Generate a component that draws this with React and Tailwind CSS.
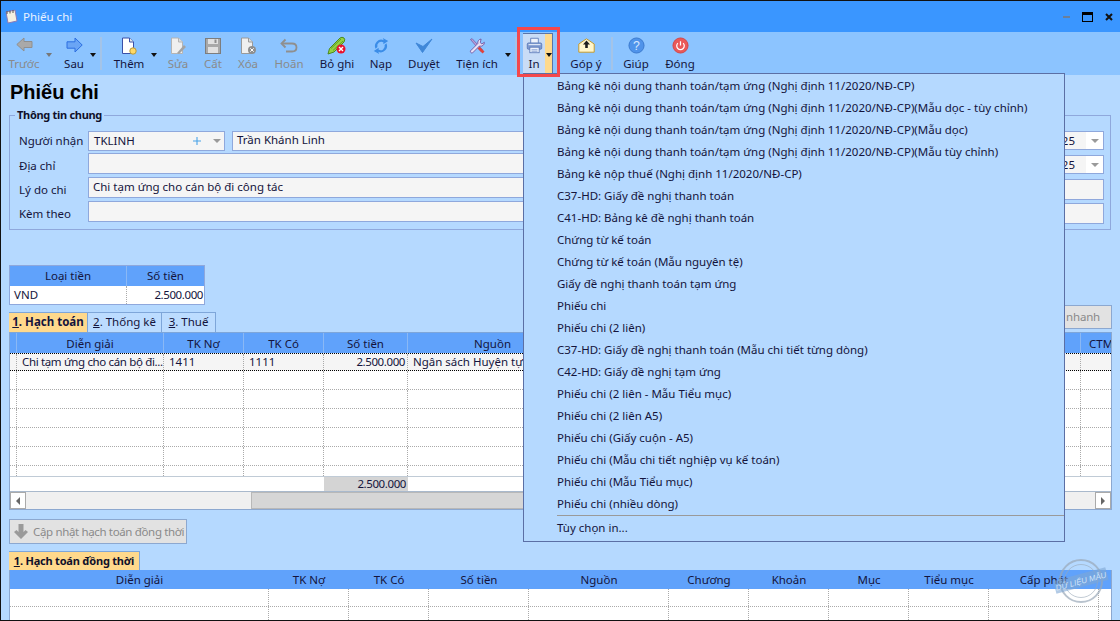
import React from "react";

const F = { fontFamily: '"Noto Sans", sans-serif' };

function ArrowL() {
  return (
    <svg width="17" height="15" viewBox="0 0 17 15" className="mb-[2px]">
      <path d="M0.8 7.5 L8 1 V4.5 H16 V10.5 H8 V14 Z" fill="#a9a9a9" stroke="#8f8f8f" />
    </svg>
  );
}
function ArrowR() {
  return (
    <svg width="17" height="16" viewBox="0 0 17 16" className="mb-[2px]">
      <path d="M16.2 8 L9 1 V4.8 H1 V11.2 H9 V15 Z" fill="#6aa5f5" stroke="#2d6fe0" />
    </svg>
  );
}
function Doc({ stroke = "#3a50a8", fold = "#e8e8e8", fill = "#ffffff", children }) {
  return (
    <svg width="18" height="18" viewBox="0 0 18 18">
      <path d="M2.5 1 H9.5 L13.5 5 V16.5 H2.5 Z" fill={fill} stroke={stroke} />
      <path d="M9.5 1 V5 H13.5" fill={fold} stroke={stroke} />
      {children}
    </svg>
  );
}
const Icons = {
  prev: <ArrowL />,
  next: <ArrowR />,
  add: (
    <Doc>
      <circle cx="13" cy="14" r="3.2" fill="#ffd966" stroke="#b89a3a" />
    </Doc>
  ),
  edit: (
    <Doc stroke="#b4b4b4" fill="#efefef" fold="#dddddd">
      <path d="M8 16 L15 8 L17 10 L10 17 Z" fill="#a3a3a3" />
    </Doc>
  ),
  save: (
    <svg width="16" height="16" viewBox="0 0 16 16">
      <rect x="0.5" y="0.5" width="15" height="15" fill="#a8a8a8" stroke="#7d7d7d" />
      <rect x="3" y="1" width="10" height="5" fill="#e0e0e0" />
      <rect x="3" y="9" width="10" height="6" fill="#e0e0e0" />
      <rect x="9.5" y="1.5" width="2" height="3.5" fill="#8f8f8f" />
    </svg>
  ),
  del: (
    <Doc stroke="#9a9a9a" fill="#efefef" fold="#dddddd">
      <circle cx="13" cy="13" r="4" fill="#8e8e8e" />
      <path d="M11.3 11.3 L14.7 14.7 M14.7 11.3 L11.3 14.7" stroke="#fff" />
    </Doc>
  ),
  undo: (
    <svg width="18" height="16" viewBox="0 0 18 16">
      <path d="M5.5 1.5 L1.5 5.5 L5.5 9.5" fill="none" stroke="#8f8f8f" strokeWidth="1.8" />
      <path d="M2 5.5 H12 Q16.5 5.5 16.5 9.5 Q16.5 13.5 12 13.5 H6" fill="none" stroke="#8f8f8f" strokeWidth="1.8" />
    </svg>
  ),
  post: (
    <svg width="20" height="19" viewBox="0 0 20 19">
      <path d="M1 18 L2.5 12.5 L13 2 Q15 0.5 17 2 Q18.5 3.5 17 6 L7 16 Z" fill="#93d241" stroke="#4b8a1e" />
      <path d="M4 12.5 L14 3 M6 14.5 L16 5" stroke="#4b8a1e" strokeWidth="0.7" />
      <circle cx="14" cy="13" r="4.5" fill="#e8112d" />
      <path d="M12 11 L16 15 M16 11 L12 15" stroke="#fff" strokeWidth="1.4" />
    </svg>
  ),
  reload: (
    <svg width="18" height="18" viewBox="0 0 20 20">
      <path d="M4 13 A7 7 0 0 1 13 3.5 L12 1 L18 4.5 L12.5 8 L12.8 6 A4.5 4.5 0 0 0 6 11 Z" fill="#3b8de8" />
      <path d="M16 7 A7 7 0 0 1 7 16.5 L8 19 L2 15.5 L7.5 12 L7.2 14 A4.5 4.5 0 0 0 14 9 Z" fill="#3b8de8" />
    </svg>
  ),
  check: (
    <svg width="18" height="16" viewBox="0 0 18 16">
      <path d="M1 5 L7.5 14.5 L17 1 L8 8.5 Z" fill="#3f87d8" stroke="#3f87d8" strokeLinejoin="round" />
    </svg>
  ),
  tools: (
    <svg width="18" height="18" viewBox="0 0 22 20">
      <path d="M3 2 L5 1 L18 15 L16 17 Z" fill="#b9a0d8" stroke="#6a4a9a" strokeWidth="0.8" />
      <path d="M13 12 L19 18" stroke="#e0433c" strokeWidth="3.4" />
      <path d="M16 1.5 A4.5 4.5 0 0 0 12 7 L3 16 A2 2 0 0 0 5.5 18.5 L14 10 A4.5 4.5 0 0 0 20 5.5 L17 7.5 L15 6 Z" fill="#e8e0f5" stroke="#6a4a9a" />
    </svg>
  ),
  printer: (
    <svg width="17" height="17" viewBox="0 0 20 20">
      <path d="M5.5 7 V1.5 H14.5 V7" fill="#eef3fb" stroke="#5a78b8" />
      <rect x="1.5" y="7" width="17" height="7.5" rx="1.5" fill="#7f9ad0" stroke="#5a78b8" />
      <rect x="3" y="8.2" width="14" height="1.4" fill="#dbe5f5" />
      <rect x="4.5" y="12" width="11" height="6.5" fill="#eef3fb" stroke="#5a78b8" />
      <path d="M6.5 15 H13.5 M6.5 16.8 H13.5" stroke="#7f9ad0" />
    </svg>
  ),
  feedback: (
    <svg width="17" height="15" viewBox="0 0 17 15">
      <path d="M0.8 6 L8.5 0.8 L16.2 6 V14.2 H0.8 Z" fill="#fff6cc" stroke="#c29a32" />
      <path d="M8.5 2.5 L12 6.5 H9.8 V10 H7.2 V6.5 H5 Z" fill="#1e1e1e" />
    </svg>
  ),
  help: (
    <svg width="17" height="17" viewBox="0 0 18 18">
      <circle cx="9" cy="9" r="8" fill="#4f93ea" stroke="#3a78cc" />
      <text x="9" y="13.5" textAnchor="middle" fontSize="13" fill="#d8e8ff" fontFamily="Liberation Sans, sans-serif">?</text>
    </svg>
  ),
  close: (
    <svg width="17" height="17" viewBox="0 0 18 18">
      <circle cx="9" cy="9" r="8" fill="#ea5858" stroke="#d24444" />
      <path d="M6.2 6.5 A4 4 0 1 0 11.8 6.5" fill="none" stroke="#fff" strokeWidth="1.3" />
      <path d="M9 4.5 V9" stroke="#fff" strokeWidth="1.3" />
    </svg>
  ),
};

function Caret({ gray, className = "" }) {
  return (
    <span
      className={
        "h-0 w-0 mt-[19px] border-x-[3px] border-t-[4px] border-x-transparent shrink-0 " +
        (gray ? "border-t-[#777777] " : "border-t-[#111111] ") +
        className
      }
    />
  );
}

function Tool({ icon, label, w, off }) {
  return (
    <div className={"flex flex-col items-center shrink-0 " + w}>
      <div className="h-[23px] flex items-center justify-center">{icon}</div>
      <div className={"mt-[-1px] text-[11.5px] leading-[16px] whitespace-nowrap " + (off ? "text-[#8a8a8a]" : "text-[#14143c]")}>
        {label}
      </div>
    </div>
  );
}

function Sep({ className = "" }) {
  return <span className={"w-[2px] h-[33px] mt-[3px] bg-[#a4c4e8] shrink-0 " + className} />;
}

function Toolbar() {
  return (
    <div className="h-[43px] shrink-0 bg-[#8cc4ff] flex items-start pt-[2px]">
      <Tool icon={Icons.prev} label="Trước" w="w-[46px]" off />
      <Caret gray className="ml-[-1px]" />
      <Tool icon={Icons.next} label="Sau" w="w-[44px]" />
      <Caret className="ml-[-6px]" />
      <Sep className="ml-[4px]" />
      <Tool icon={Icons.add} label="Thêm" w="w-[46px] ml-[4px]" />
      <Caret className="ml-[-1px]" />
      <Tool icon={Icons.edit} label="Sửa" w="w-[36px] ml-[3px]" off />
      <Tool icon={Icons.save} label="Cất" w="w-[34px]" off />
      <Tool icon={Icons.del} label="Xóa" w="w-[36px]" off />
      <Tool icon={Icons.undo} label="Hoãn" w="w-[46px]" off />
      <Tool icon={Icons.post} label="Bỏ ghi" w="w-[50px]" />
      <Tool icon={Icons.reload} label="Nạp" w="w-[38px]" />
      <Tool icon={Icons.check} label="Duyệt" w="w-[48px]" />
      <Tool icon={Icons.tools} label="Tiện ích" w="w-[58px]" />
      <Caret className="ml-[-1px]" />
      <Sep className="ml-[4px]" />
      <div className="flex w-[30px] h-[40px] mt-[-1px] ml-[6px] shrink-0 border-t border-r border-[#5a74a8]">
        <div className="w-[22px] bg-[#c9dcf6] flex flex-col items-center">
          <Tool icon={Icons.printer} label="In" w="w-[22px]" />
        </div>
        <div className="flex-1 bg-[#ffd98c] flex justify-center">
          <Caret className="mt-[19px]" />
        </div>
      </div>
      <Sep className="ml-[3px]" />
      <Tool icon={Icons.feedback} label="Góp ý" w="w-[50px] ml-[3px]" />
      <Sep />
      <Tool icon={Icons.help} label="Giúp" w="w-[46px]" />
      <Tool icon={Icons.close} label="Đóng" w="w-[42px]" />
    </div>
  );
}

function Label({ children, className = "" }) {
  return (
    <span className={"w-[78px] shrink-0 pl-[9px] text-[11.5px] leading-[20px] text-[#14143c] whitespace-nowrap " + className}>
      {children}
    </span>
  );
}
function Box({ className = "", children }) {
  return (
    <div className={"border border-[#8fa8dc] bg-[#f5f5f5] px-[4px] text-[11.5px] leading-[16px] text-[#14143c] whitespace-nowrap overflow-hidden " + className}>
      {children}
    </div>
  );
}
function DateBox({ value, className = "" }) {
  return (
    <div className={"w-[92px] h-[19px] border border-[#8fa8dc] bg-[#f5f5f5] flex text-[11.5px] leading-[17px] text-[#14143c] shrink-0 " + className}>
      <span className="flex-1 text-right pr-[11px]">{value}</span>
      <span className="w-[17px] bg-white flex items-center justify-center">
        <span className="h-0 w-0 border-x-[4px] border-t-[4px] border-x-transparent border-t-[#9a9a9a]" />
      </span>
    </div>
  );
}

function GroupBox() {
  return (
    <fieldset className="ml-[8px] mr-[9px] h-[122px] shrink-0 border border-[#8fa8dc] pl-0 pr-[6px] pb-0">
      <legend className="ml-[5px] px-[2px] text-[11px] tracking-[-0.3px] leading-[14px] font-bold text-[#10102a] whitespace-nowrap">
        Thông tin chung
      </legend>
      <div className="flex flex-col mt-[9px]">
        <div className="flex items-start h-[20px] mb-[2px]">
          <Label>Người nhận</Label>
          <div className="w-[137px] h-[20px] border border-[#8fa8dc] bg-[#f5f5f5] flex items-center pl-[5px] text-[11.5px] text-[#14143c] shrink-0">
            <span className="flex-1">TKLINH</span>
            <svg width="10" height="10" viewBox="0 0 10 10" className="mr-[11px]">
              <path d="M5 1 V9 M1 5 H9" stroke="#4aa3e8" strokeWidth="1.1" />
            </svg>
            <span className="h-0 w-0 mr-[3px] border-x-[4px] border-t-[4px] border-x-transparent border-t-[#9a9a9a]" />
          </div>
          <Box className="flex-1 h-[20px] ml-[7px] mr-[6px]">Trần Khánh Linh</Box>
          <DateBox value="01/01/2025" />
        </div>
        <div className="flex items-start h-[21px] mb-[3px]">
          <Label className="mt-[3px]">Địa chỉ</Label>
          <Box className="flex-1 h-[21px] mr-[6px]" />
          <DateBox value="01/01/2025" className="mt-[2px]" />
        </div>
        <div className="flex items-start h-[21px] mb-[3px]">
          <Label className="mt-[3px]">Lý do chi</Label>
          <Box className="flex-1 h-[21px] mr-[6px] pt-[1px]">Chi tạm ứng cho cán bộ đi công tác</Box>
          <Box className="w-[80px] h-[21px] mt-[2px] shrink-0" />
        </div>
        <div className="flex items-start h-[21px]">
          <Label className="mt-[3px] pl-[8px]">Kèm theo</Label>
          <Box className="flex-1 h-[21px] mr-[6px]" />
          <Box className="w-[80px] h-[21px] mt-[2px] shrink-0" />
        </div>
      </div>
    </fieldset>
  );
}

function Currency() {
  return (
    <div className="ml-[8px] mt-[35px] w-[196px] h-[40px] shrink-0 border border-[#8fa8dc] bg-white text-[11.5px] text-[#14143c]">
      <div className="grid grid-cols-[117px_1fr] h-[20px] bg-[#60a2fb] leading-[20px] text-center">
        <span className="border-r border-[#8ab8f5]">Loại tiền</span>
        <span>Số tiền</span>
      </div>
      <div className="grid grid-cols-[117px_1fr] h-[18px] leading-[18px]">
        <span className="pl-[4px] border-r border-dotted border-[#aaaaaa]">VND</span>
        <span className="text-right pr-[1px] tracking-[-0.4px]">2.500.000</span>
      </div>
    </div>
  );
}

function Tab({ children, k, active, w }) {
  return (
    <div className={"h-[20px] border-t border-r border-[#7ea6d9] text-center text-[11.5px] leading-[18px] text-[#14143c] shrink-0 whitespace-nowrap " + w + (active ? " bg-[#ffd98c] font-bold" : " bg-[#bcdcff]")}>
      <span className="underline">{k}</span>
      {children}
    </div>
  );
}

const UP = "grid grid-cols-[7px_147px_80px_80px_84px_170px_1fr_30px]";
const LOW = "grid grid-cols-[259px_80px_80px_100px_140px_80px_80px_80px_80px_110px_1fr]";

function UpperRow({ cells = [], first }) {
  return (
    <div className={UP + " shrink-0 text-[11.5px] leading-[16px] text-[#14143c] " + (first ? "bg-[#f5f5f5] h-[18px] border-y border-dotted border-black" : "h-[19px] border-b border-dotted border-[#aaaaaa] bg-white")}>
      {[0, 1, 2, 3, 4, 5, 6, 7].map((i) => (
        <span
          key={i}
          className={
            "overflow-hidden whitespace-nowrap border-r border-dotted border-[#aaaaaa] last:border-r-0 " +
            (i === 4 ? "text-right pr-[2px] tracking-[-0.4px]" : "pl-[5px]") +
            (i === 1 ? " tracking-[-0.35px]" : "")
          }
        >
          {cells[i] || ""}
        </span>
      ))}
    </div>
  );
}

function UpperGrid() {
  return (
    <div className="mx-[8px] h-[178px] shrink-0 border-x border-b border-[#8ca8d0] flex flex-col">
      <div className={UP + " h-[21px] shrink-0 bg-[#60a2fb] text-[11.5px] leading-[21px] text-center text-[#14143c] border-t border-[#7ea6d9]"}>
        {["", "Diễn giải", "TK Nợ", "TK Có", "Số tiền", "Nguồn", ""].map((t, i) => (
          <span key={i} className="border-r border-[#8ab8f5] overflow-hidden whitespace-nowrap">
            {t}
          </span>
        ))}
        <span className="pl-[8px] text-left overflow-hidden whitespace-nowrap">CTM</span>
      </div>
      <UpperRow first cells={["", "Chi tạm ứng cho cán bộ đi...", "1411", "1111", "2.500.000", "Ngân sách Huyện tự chủ"]} />
      <UpperRow />
      <UpperRow />
      <UpperRow />
      <UpperRow />
      <UpperRow />
      <div className={UP + " h-[10px] shrink-0 bg-white"}>
        {[0, 1, 2, 3, 4, 5, 6, 7].map((i) => (
          <span key={i} className="border-r border-dotted border-[#aaaaaa] last:border-r-0" />
        ))}
      </div>
      <div className={UP + " h-[15px] shrink-0 bg-white border-t border-[#c0cbd6] text-[11.5px] leading-[14px] text-[#14143c]"}>
        <span />
        <span />
        <span />
        <span />
        <span className="bg-[#d4d4d4] text-right pr-[2px] tracking-[-0.4px]">2.500.000</span>
      </div>
      <div className="flex-1 flex bg-[#f0f0f0] border-t border-[#a9b9cc]">
        <div className="w-[16px] bg-white border border-[#aaaaaa] flex items-center justify-center">
          <span className="h-0 w-0 border-y-[4px] border-r-[4px] border-y-transparent border-r-[#666666]" />
        </div>
        <div className="w-[225px]" />
        <div className="flex-1 bg-[#d6d6d6] border border-[#b8b8b8] mr-[300px]" />
        <div className="w-[16px] bg-white border border-[#aaaaaa] flex items-center justify-center">
          <span className="h-0 w-0 border-y-[4px] border-l-[4px] border-y-transparent border-l-[#666666]" />
        </div>
      </div>
    </div>
  );
}

function LowerGrid() {
  const cells = ["", "", "", "", "", "", "", "", "", "", ""];
  return (
    <div className="mx-[8px] flex-1 border-x border-[#8ca8d0] bg-white overflow-hidden">
      <div className={LOW + " h-[19px] bg-[#60a2fb] text-[11.5px] leading-[19px] text-center text-[#14143c]"}>
        {["Diễn giải", "TK Nợ", "TK Có", "Số tiền", "Nguồn", "Chương", "Khoản", "Mục", "Tiểu mục", "Cấp phát", ""].map((t, i) => (
          <span key={i}>{t}</span>
        ))}
      </div>
      {[0, 1].map((r) => (
        <div key={r} className={LOW + " h-[18px] border-b border-dotted border-[#aaaaaa]"}>
          {cells.map((_, i) => (
            <span key={i} className="border-r border-dotted border-[#aaaaaa] last:border-r-0" />
          ))}
        </div>
      ))}
    </div>
  );
}

const MENU = [
  "Bảng kê nội dung thanh toán/tạm ứng (Nghị định 11/2020/NĐ-CP)",
  "Bảng kê nội dung thanh toán/tạm ứng (Nghị định 11/2020/NĐ-CP)(Mẫu dọc - tùy chỉnh)",
  "Bảng kê nội dung thanh toán/tạm ứng (Nghị định 11/2020/NĐ-CP)(Mẫu dọc)",
  "Bảng kê nội dung thanh toán/tạm ứng (Nghị định 11/2020/NĐ-CP)(Mẫu tùy chỉnh)",
  "Bảng kê nộp thuế (Nghị định 11/2020/NĐ-CP)",
  "C37-HD: Giấy đề nghị thanh toán",
  "C41-HD: Bảng kê đề nghị thanh toán",
  "Chứng từ kế toán",
  "Chứng từ kế toán (Mẫu nguyên tệ)",
  "Giấy đề nghị thanh toán tạm ứng",
  "Phiếu chi",
  "Phiếu chi (2 liên)",
  "C37-HD: Giấy đề nghị thanh toán (Mẫu chi tiết từng dòng)",
  "C42-HD: Giấy đề nghị tạm ứng",
  "Phiếu chi (2 liên - Mẫu Tiểu mục)",
  "Phiếu chi (2 liên A5)",
  "Phiếu chi (Giấy cuộn - A5)",
  "Phiếu chi (Mẫu chi tiết nghiệp vụ kế toán)",
  "Phiếu chi (Mẫu Tiểu mục)",
  "Phiếu chi (nhiều dòng)",
];

function Menu() {
  return (
    <div className="absolute left-[522px] top-[72px] w-[542px] h-[469px] bg-[#b5d9ff] border border-[#5b6fa5] pt-[1px] text-[11.5px] text-[#14143c]">
      {MENU.map((m) => (
        <div key={m} className="h-[22px] leading-[22px] pl-[33px] whitespace-nowrap">
          {m}
        </div>
      ))}
      <div className="ml-[33px] h-[1px] bg-[#9a9a9a]" />
      <div className="h-[24px] leading-[24px] pl-[33px]">Tùy chọn in...</div>
    </div>
  );
}

function Stamp() {
  return (
    <svg width="58" height="48" viewBox="0 0 58 48" className="absolute left-[1052px] top-[556px]">
      <circle cx="28" cy="24" r="21" fill="none" stroke="#9aa8b8" strokeWidth="2" opacity="0.7" />
      <circle cx="28" cy="24" r="16.5" fill="none" stroke="#9aa8b8" strokeWidth="1" opacity="0.6" />
      <g transform="rotate(-15 28 24)">
        <rect x="1" y="17" width="54" height="13" fill="#7fa6d4" opacity="0.6" />
        <text x="28" y="27" textAnchor="middle" fontSize="8" fontStyle="italic" fill="#cfe2f7" fontFamily="Liberation Sans, sans-serif">
          DỮ LIỆU MẪU
        </text>
      </g>
    </svg>
  );
}

export default function App() {
  return (
    <div style={F} className="relative w-[1120px] h-[621px] overflow-hidden bg-[#b5d9ff] border-t border-l border-b border-[#111111] flex flex-col">
      <div className="h-[31px] shrink-0 bg-[#3a96ff] flex items-center pl-[3px] text-white">
        <svg width="15" height="15" viewBox="0 0 15 15">
          <path d="M2 3 L11 1 L13 12 L4 14 Z" fill="#f4f0e0" stroke="#8a7ab8" />
          <path d="M3 2 V5 M6 1.5 V4.5 M9 1 V4" stroke="#555" />
        </svg>
        <span className="ml-[4px] text-[11.5px] text-[#e8f2ff]">Phiếu chi</span>
        <div className="ml-auto flex items-center mr-[7px]">
          <span className="w-[7px] h-[2px] bg-[#6b7f99] mr-[12px]" />
          <span className="w-[11px] h-[10px] border border-black border-t-[3px] mr-[12px]" />
          <svg width="8" height="8" viewBox="0 0 8 8">
            <path d="M1 1 L7 7 M7 1 L1 7" stroke="#111" strokeWidth="2" />
          </svg>
        </div>
      </div>
      <Toolbar />
      <div className="px-[9px] h-[33px] shrink-0 pt-[3px] text-[20px] leading-[28px] font-bold text-black" style={{ fontFamily: '"Liberation Sans", sans-serif' }}>
        Phiếu chi
      </div>
      <GroupBox />
      <Currency />
      <div className="h-[27px] mx-[8px] flex items-end shrink-0">
        <Tab k="1" active w="w-[79px]">. Hạch toán</Tab>
        <Tab k="2" w="w-[74px]">. Thống kê</Tab>
        <Tab k="3" w="w-[54px]">. Thuế</Tab>
        <div className="ml-auto mb-[3px] w-[120px] h-[24px] bg-[#e2e2e2] border border-[#8ca8d0] text-right pr-[11px] text-[11.5px] tracking-[-0.2px] leading-[22px] text-[#8a8a8a]">
          Tìm nhanh
        </div>
      </div>
      <UpperGrid />
      <div className="ml-[8px] mt-[9px] w-[178px] h-[25px] bg-[#e2e2e2] border border-[#8ca8d0] flex items-center pl-[3px] text-[11.5px] tracking-[-0.35px] text-[#8a8a8a] shrink-0 whitespace-nowrap">
        <svg width="16" height="17" viewBox="0 0 16 17" className="mr-[4px] shrink-0">
          <path d="M8 16 L1 9 L3.5 7 L5.5 9 V1 H10.5 V9 L12.5 7 L15 9 Z" fill="#9a9a9a" />
        </svg>
        Cập nhật hạch toán đồng thời
      </div>
      <div className="mx-[8px] mt-[7px] h-[19px] shrink-0">
        <div className="w-[131px] h-[19px] bg-[#ffd98c] border-t border-r border-[#7ea6d9] text-center text-[11px] tracking-[-0.2px] leading-[17px] font-bold text-[#10102a] whitespace-nowrap">
          <span className="underline">1</span>. Hạch toán đồng thời
        </div>
      </div>
      <LowerGrid />
      <Menu />
      <div className="absolute left-[516px] top-[26px] w-[43px] h-[50px] border-[3px] border-[#f4484c]" />
      <Stamp />
    </div>
  );
}
